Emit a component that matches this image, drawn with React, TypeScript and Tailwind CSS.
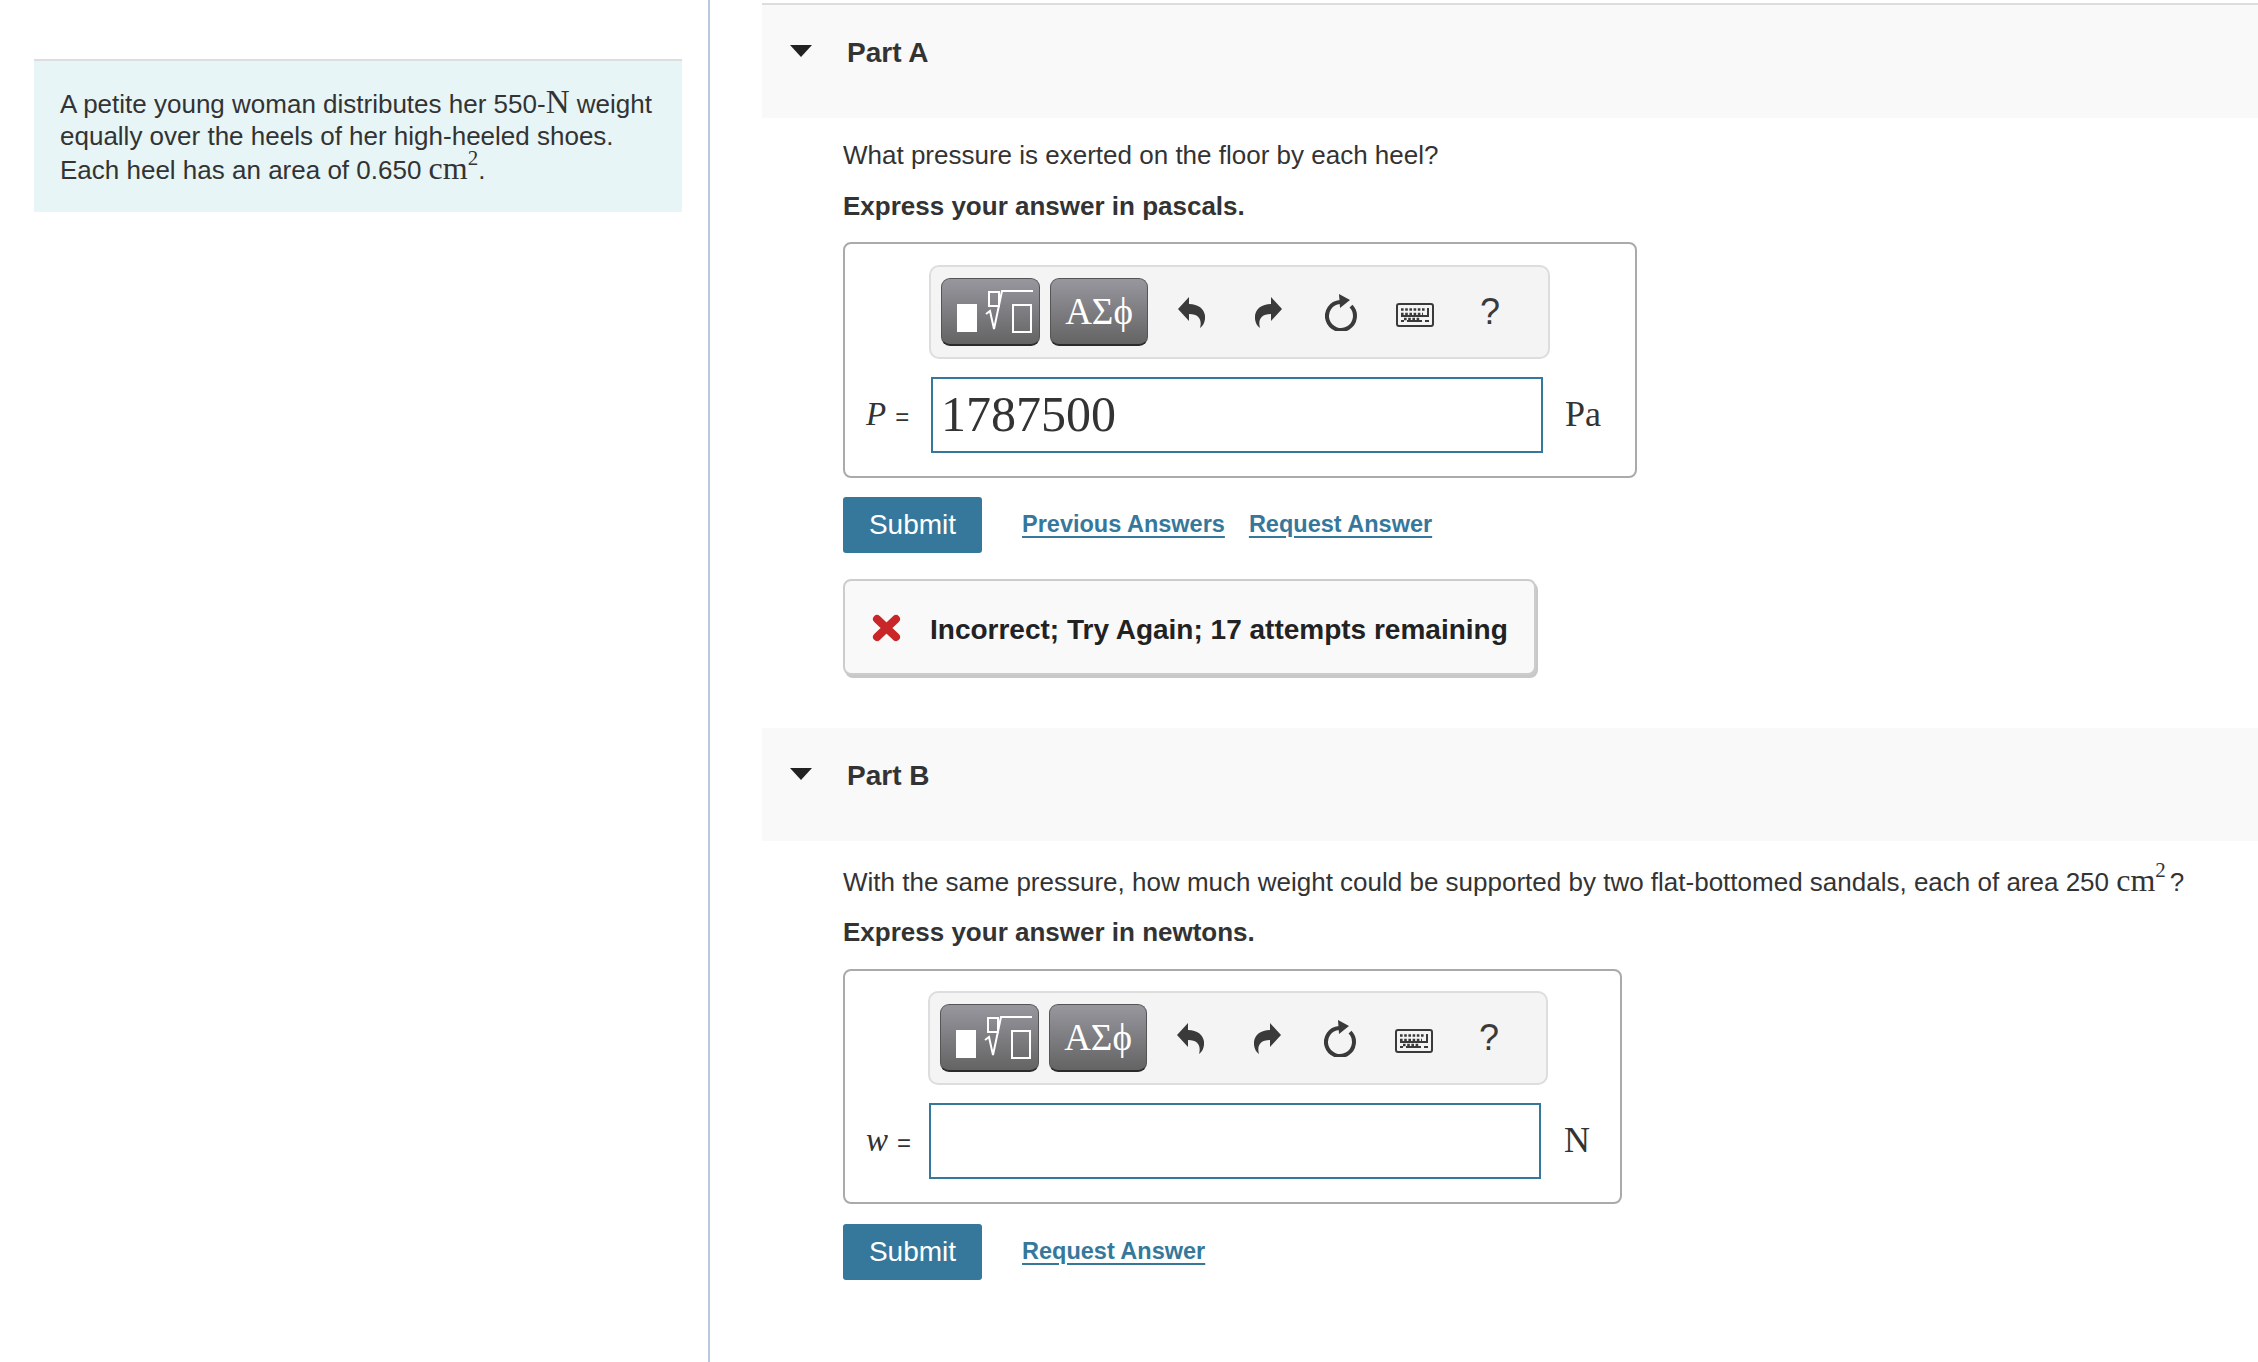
import React from 'react';

const serif = "font-['Liberation_Serif',serif]";
const sans = "font-['Liberation_Sans',sans-serif]";

const RadicalIcon = () => (
  <svg width="97" height="66" viewBox="0 0 97 66" fill="none">
    <rect x="15" y="25" width="20" height="28" fill="#fff" />
    <rect x="47" y="13" width="10" height="14" stroke="#fff" strokeWidth="2" />
    <path d="M44 35 L48 32 L52 50 L60 12 H91" stroke="#fff" strokeWidth="2" />
    <rect x="71" y="26" width="18" height="27" stroke="#fff" strokeWidth="2" />
  </svg>
);

const UndoIcon = ({ flip }: { flip?: boolean }) => (
  <svg width="27" height="31" viewBox="0 0 27 31" fill="#3a3a3a">
    <path
      transform={flip ? 'translate(27 0) scale(-1 1)' : undefined}
      d="M0 12 L11 0 V7 C22 7 28 14 27 22 C26.5 26 25 29 22 31 C24 24 22 17 11 17 V24 Z"
    />
  </svg>
);

const ResetIcon = () => (
  <svg width="32" height="37" viewBox="0 0 32 37" fill="none">
    <path d="M15 8 A14 14 0 1 0 26 12.2" stroke="#3a3a3a" strokeWidth="4" />
    <path d="M14 0 L25 6 L15 14 Z" fill="#3a3a3a" />
  </svg>
);

const KeyboardIcon = () => (
  <svg width="38" height="24" viewBox="0 0 38 24" fill="none">
    <rect x="1" y="1" width="36" height="22" rx="2" stroke="#3a3a3a" strokeWidth="2" />
    <path d="M5 6.5 H29 M5 11 H27 M8 16 H24" stroke="#3a3a3a" strokeWidth="2.6" strokeDasharray="2.6 1.6" />
    <path d="M32 5 V13 H5 M5 18 H8 M11 18 H26 M29 18 H33" stroke="#3a3a3a" strokeWidth="2" />
  </svg>
);

const Toolbar = ({ width, marginLeft }: { width: string; marginLeft: string }) => (
  <div className={`${width} ${marginLeft} h-[94px] flex items-center pl-[10px] rounded-[10px] border-2 border-[#dddddd] bg-[#f4f4f4]`}>
    <div className="w-[99px] h-[68px] rounded-[9px] border border-[#555555] border-b-2 border-b-[#2b2b2b] bg-linear-to-b from-[#98979f] to-[#646464] flex items-center justify-center">
      <RadicalIcon />
    </div>
    <div className={`ml-[10px] w-[98px] h-[68px] rounded-[9px] border border-[#555555] border-b-2 border-b-[#2b2b2b] bg-linear-to-b from-[#98979f] to-[#646464] flex items-center justify-center text-white text-[37px] leading-none ${serif}`}>
      ΑΣϕ
    </div>
    <div className="ml-[30px]"><UndoIcon /></div>
    <div className="ml-[50px]"><UndoIcon flip /></div>
    <div className="ml-[43px]"><ResetIcon /></div>
    <div className="ml-[39px] mt-[6px]"><KeyboardIcon /></div>
    <div className={`ml-[46px] -mt-[1px] text-[#3a3a3a] text-[36px] leading-none ${sans}`}>?</div>
  </div>
);

const PartHeader = ({ title, height }: { title: string; height: string }) => (
  <div className={`${height} bg-[#f9f9f9] flex items-start pt-[30px] pl-[28px]`}>
    <svg width="22" height="12" viewBox="0 0 22 12" className="mt-[10px]" fill="#222222">
      <path d="M0 0 H22 L11 12 Z" />
    </svg>
    <span className="ml-[35px] font-bold text-[28px] leading-[36px] text-[#333333]">{title}</span>
  </div>
);

const AnswerBox = ({ boxSize, toolbarWidth, toolbarLeft, labelWidth, inputWidth, symbol, value, unit, unitLeft }: {
  boxSize: string;
  toolbarWidth: string;
  toolbarLeft: string;
  labelWidth: string;
  inputWidth: string;
  symbol: string;
  value?: string;
  unit: string;
  unitLeft: string;
}) => (
  <div className={`${boxSize} rounded-[8px] border-2 border-[#aaaaaa]`}>
    <Toolbar width={toolbarWidth} marginLeft={toolbarLeft} />
    <div className="mt-[18px] flex items-center">
      <div className={`${labelWidth} pl-[21px] flex items-baseline text-[#333333] text-[33px] ${serif}`}>
        <i>{symbol}</i>
        <span className={`ml-[9px] text-[24px] ${sans}`}>=</span>
      </div>
      <div className={`${inputWidth} h-[76px] border-2 border-[#36789b] pl-[8px] pb-[2px] flex items-center text-[50px] text-[#333333] ${serif}`}>
        {value}
      </div>
      <div className={`${unitLeft} -mt-[3px] text-[36px] text-[#333333] ${serif}`}>{unit}</div>
    </div>
  </div>
);

const SubmitRow = ({ links, spacing }: { links: string[]; spacing: string }) => (
  <div className={`${spacing} flex items-center`}>
    <button className="w-[139px] h-[56px] rounded-[3px] bg-[#36789b] text-white text-[28px]">Submit</button>
    <div className="ml-[40px] -mt-[1px] flex gap-[24px]">
      {links.map((l) => (
        <a key={l} className="font-bold text-[23.5px] text-[#36789b] underline underline-offset-[4px]">{l}</a>
      ))}
    </div>
  </div>
);

const CmSquared = () => (
  <span className={`${serif} text-[32px] leading-none`}>cm<sup className="text-[21px] -top-[0.65em]">2</sup></span>
);

export default function App() {
  return (
    <div className={`h-[1362px] flex overflow-hidden bg-white text-[#333333] ${sans}`}>
      {/* Intro panel */}
      <div className="w-[710px] shrink-0 border-r-2 border-[#b9c9dc] pl-[34px] pt-[59px]">
        <div className="w-[648px] h-[153px] border-t-2 border-[#dddddd] bg-[#e7f5f6] pl-[26px] pt-[25px] text-[26px] leading-[32px]">
          <p>
            A petite young woman distributes her 550-<span className={`${serif} text-[33px] leading-none`}>N</span> weight
            <br />
            equally over the heels of her high-heeled shoes.
            <br />
            Each heel has an area of 0.650 <CmSquared />.
          </p>
        </div>
      </div>

      {/* Parts */}
      <div className="flex-1 pl-[52px] pt-[3px]">
        <div className="border-t-2 border-[#dddddd]">
          <PartHeader title="Part A" height="h-[113px]" />
        </div>
        <div className="pl-[81px]">
          <p className="mt-[21px] text-[26px] leading-[33px]">What pressure is exerted on the floor by each heel?</p>
          <p className="mt-[18px] font-bold text-[26px] leading-[33px]">Express your answer in pascals.</p>
          <AnswerBox
            boxSize="mt-[19px] w-[794px] h-[236px] pt-[21px]"
            toolbarWidth="w-[621px]"
            toolbarLeft="ml-[84px]"
            labelWidth="w-[86px]"
            inputWidth="w-[612px]"
            symbol="P"
            value="1787500"
            unit="Pa"
            unitLeft="ml-[22px]"
          />
          <SubmitRow links={['Previous Answers', 'Request Answer']} spacing="mt-[19px]" />
          <div className="mt-[26px] w-[693px] h-[96px] rounded-[8px] border-2 border-[#cccccc] bg-[#f9f9f9] shadow-[2px_3px_0_#c8c8c8] flex items-center pl-[27px]">
            <svg width="29" height="28" viewBox="0 0 29 28" className="mt-[2px]">
              <path d="M5 5 L24 23 M24 5 L5 23" stroke="#c9262a" strokeWidth="8" strokeLinecap="round" />
            </svg>
            <span className="ml-[29px] mt-[6px] font-bold text-[28px] text-[#222222]">Incorrect; Try Again; 17 attempts remaining</span>
          </div>
        </div>

        <div className="mt-[53px]">
          <PartHeader title="Part B" height="h-[113px]" />
        </div>
        <div className="pl-[81px]">
          <p className="mt-[23px] text-[26px] leading-[33px] whitespace-nowrap">
            With the same pressure, how much weight could be supported by two flat-bottomed sandals, each of area 250 <CmSquared /><span className="ml-[4px]">?</span>
          </p>
          <p className="mt-[17px] font-bold text-[26px] leading-[33px]">Express your answer in newtons.</p>
          <AnswerBox
            boxSize="mt-[20px] w-[779px] h-[235px] pt-[20px]"
            toolbarWidth="w-[620px]"
            toolbarLeft="ml-[83px]"
            labelWidth="w-[84px]"
            inputWidth="w-[612px]"
            symbol="w"
            unit="N"
            unitLeft="ml-[23px]"
          />
          <SubmitRow links={['Request Answer']} spacing="mt-[20px]" />
        </div>
      </div>
    </div>
  );
}
